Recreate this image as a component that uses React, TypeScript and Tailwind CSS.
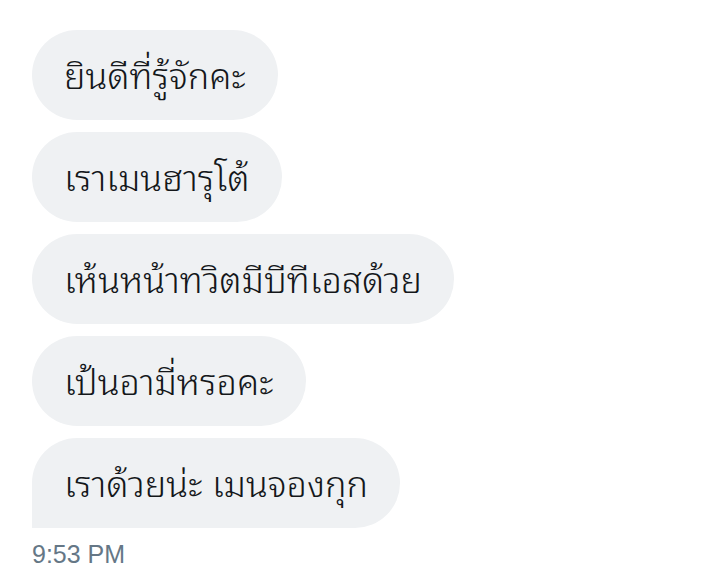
const messages = [
  "ยินดีที่รู้จักคะ",
  "เราเมนฮารุโต้",
  "เห้นหน้าทวิตมีบีทีเอสด้วย",
  "เป้นอามี่หรอคะ",
  "เราด้วยน่ะ เมนจองกุก",
];

export default function App() {
  return (
    <div className="w-[702px] h-[588px] bg-white pt-[30px] px-[32px] font-['Noto_Sans_Thai_Looped','Noto_Sans','Noto_Sans_Thai',sans-serif]">
      <div className="flex flex-col items-start gap-[12px]">
        {messages.map((text, i) => (
          <div
            key={i}
            className={
              i === messages.length - 1
                ? "h-[90px] flex items-center px-[32px] pb-[4px] bg-[#eff1f3] text-[#14171a] text-[36px] font-light rounded-[45px] rounded-bl-none"
                : "h-[90px] flex items-center px-[32px] pb-[4px] bg-[#eff1f3] text-[#14171a] text-[36px] font-light rounded-[45px]"
            }
          >
            {text}
          </div>
        ))}
      </div>
      <div className="mt-[11px] text-[25px] leading-[30px] text-[#657786] font-['Liberation_Sans',sans-serif]">
        9:53 PM
      </div>
    </div>
  );
}
